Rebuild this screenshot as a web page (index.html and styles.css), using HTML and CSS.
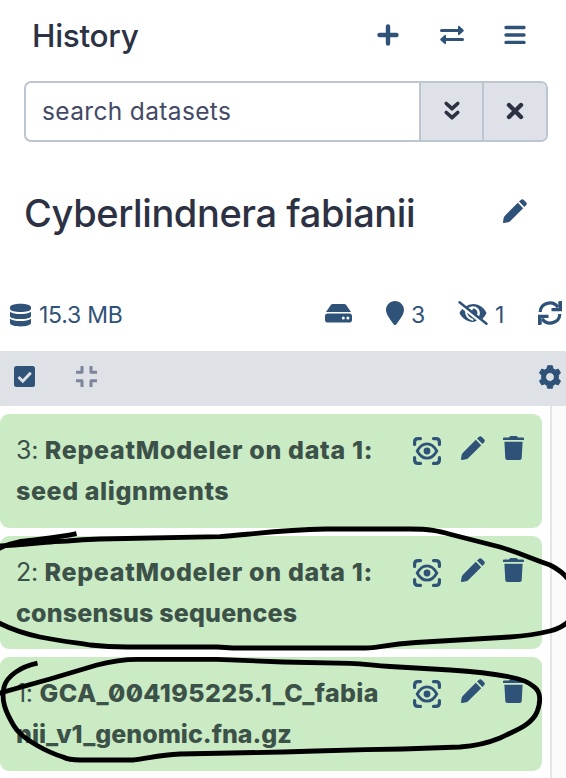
FILE: index.html
```html
<!DOCTYPE html>
<html lang="en">
<head>
<meta charset="utf-8">
<title>History</title>
<link rel="stylesheet" href="styles.css">
</head>
<body>
<svg class="defs" aria-hidden="true">
  <symbol id="pencil" viewBox="0 0 24 24"><path d="M14.8 3.8 20.2 9.2 7.1 22.3Q6.2 23.1 5 23.3L1.2 24Q0 24.2 0 23L.7 18.8Q.9 17.7 1.7 16.9ZM16 2.6 17.8.9Q19.3-.5 20.8.9L23.1 3.2Q24.5 4.7 23.1 6.2L21.4 8Z"/></symbol>
  <symbol id="trash" viewBox="0 0 21 24"><path d="M1 1.6H6L6.7.5Q7 0 7.7 0H13.3Q14 0 14.3.5L15 1.6H20Q21 1.6 21 2.6V4H0V2.6Q0 1.6 1 1.6ZM1.4 5.8H19.6L18.7 22.2Q18.5 24 16.7 24H4.3Q2.5 24 2.3 22.2Z"/></symbol>
  <symbol id="view" viewBox="0 0 28 28"><g fill="none" stroke="currentColor" stroke-width="3.2" stroke-linecap="round"><path d="M1.6 7.5V5Q1.6 1.6 5 1.6H7.5M20.5 1.6H23Q26.4 1.6 26.4 5V7.5M26.4 20.5V23Q26.4 26.4 23 26.4H20.5M7.5 26.4H5Q1.6 26.4 1.6 23V20.5"/><path stroke-width="2.8" d="M4.2 14Q8.1 6.8 14 6.8T23.8 14Q19.9 21.2 14 21.2T4.2 14Z"/></g><circle cx="14" cy="14" r="3.4"/></symbol>
</svg>

<header class="top">
  <h1>History</h1>
  <nav class="top-actions">
    <svg width="22" height="22" viewBox="0 0 22 22"><path class="line" stroke-width="4.4" d="M11 2.5V19.5M2.5 11H19.5"/></svg>
    <svg width="24" height="20" viewBox="0 0 24 20"><path class="line" stroke-width="3" d="M1.5 5.5H19M5 14.5H22.5"/><path d="M18 1.9Q18 .5 19.3 1L23.5 4.7Q24.2 5.5 23.5 6.3L19.3 10Q18 10.5 18 9.1ZM6 10.9Q6 9.5 4.7 10L.5 13.7Q-.2 14.5 .5 15.3L4.7 19Q6 19.5 6 18.1Z"/></svg>
    <svg width="22" height="20" viewBox="0 0 22 20"><path class="line" stroke-width="3.4" d="M2 2.5H20M2 10H20M2 17.4H20"/></svg>
  </nav>
</header>

<div class="search">
  <div class="search-field">search datasets</div>
  <div class="search-btn"><svg width="16" height="20" viewBox="0 0 16 20"><path class="line" stroke-width="3.7" d="M2.3 2.5 8 7.7 13.7 2.5M2.3 11.5 8 16.7 13.7 11.5"/></svg></div>
  <div class="search-btn last"><svg width="18" height="18" viewBox="0 0 18 18"><path class="line" stroke-width="4.4" d="M3 3 15 15M15 3 3 15"/></svg></div>
</div>

<div class="name-row">
  <h2>Cyberlindnera fabianii</h2>
  <svg width="24" height="24"><use href="#pencil"/></svg>
</div>

<div class="stats">
  <svg class="db" width="22" height="24" viewBox="0 0 22 24"><path d="M0 4C0-.9 22-.9 22 4V5.5C22 10 0 10 0 5.5ZM0 8.5C4 11.7 18 11.7 22 8.5V13C22 17.4 0 17.4 0 13ZM0 16C4 19.2 18 19.2 22 16V20.5C22 25.2 0 25.2 0 20.5Z"/></svg>
  <span class="size">15.3 MB</span>
  <svg class="disk" width="27" height="19" viewBox="0 0 27 19"><path d="M5.8 1Q6.5 0 7.8 0H19.2Q20.5 0 21.2 1L26 8H1ZM2.8 9.5H24.2Q27 9.5 27 12.3V15.7Q27 18.5 24.2 18.5H2.8Q0 18.5 0 15.7V12.3Q0 9.5 2.8 9.5Z"/><circle class="hole" cx="18.3" cy="14" r="1.5"/><circle class="hole" cx="22.9" cy="14" r="1.5"/></svg>
  <svg class="pin" width="18" height="24" viewBox="0 0 18 24"><path d="M9 0C14 0 18 4 18 9 18 13.5 12.8 20 10.2 23.4Q9 24.6 7.8 23.4C5.2 20 0 13.5 0 9 0 4 4 0 9 0Z"/></svg>
  <span class="count">3</span>
  <svg class="hidden-eye" width="30" height="24" viewBox="0 0 30 24"><path d="M7.2 5.8Q10.7 3 15 3C21.8 3 26.5 7.7 28.3 11.4Q28.5 12 28.3 12.6 27 15.7 24.1 18.2L20.8 15.6Q21.9 14 21.9 12C21.9 8.2 18.8 5.2 15 5.2Q12.4 5.2 10.4 6.8L9.5 7.6ZM4.3 8.1 18.8 19.6Q17 21 15 21C8.2 21 3.5 16.3 1.7 12.6Q1.5 12 1.7 11.4 2.6 9.7 4.3 8.1Z"/><path d="M13.5 9.5Q15.2 8.8 15 7.5C18 7.5 20 10 19.3 13.2L18.5 14Z"/><path class="under" d="M8 9.8Q7.8 16.8 15.2 19"/><path class="line" stroke-width="2.5" d="M1.5 1.2 28.5 22.8"/></svg>
  <span class="count one">1</span>
  <svg class="sync" width="24" height="24" viewBox="0 0 24 24"><path class="arc" d="M2.2 11C2.5 2 14.5-1.4 20 6.3M21.8 13C21.5 22 9.5 25.4 4 17.7"/><path d="M20.2 1Q20.7 0 22 0H24V10.3H13.5V7.1H20.5ZM3.8 23Q3.3 24 2 24H0V13.7H10.5V16.9H3.5Z"/></svg>
</div>

<div class="toolbar">
  <svg width="21" height="21" viewBox="0 0 21 21"><rect width="21" height="21" rx="2.5"/><path class="check" d="M4.5 11 8.8 15.2 16.8 6.8"/></svg>
  <svg class="compress" width="21" height="21" viewBox="0 0 21 21"><path d="M0 6.2H6V0M15 0V6.2H21M0 14.8H6V21M15 21V14.8H21"/></svg>
  <svg class="gear" width="22" height="24" viewBox="0 0 22 24"><path fill-rule="evenodd" stroke="currentColor" stroke-linejoin="round" d="M8.6.8H13.4L14 3.8 16.4 5.1 19.3 4.1 21.5 8 19.3 10.2V13.8L21.5 16 19.3 19.9 16.4 18.9 14 20.2 13.4 23.2H8.6L8 20.2 5.6 18.9 2.7 19.9.5 16 2.7 13.8V10.2L.5 8 2.7 4.1 5.6 5.1 8 3.8ZM11 7.6A4.4 4.4 0 1 0 11 16.4 4.4 4.4 0 1 0 11 7.6Z"/></svg>
</div>

<main class="panel">
  <section class="list">
    <article class="card">
      <div class="label">3: <b class="a">RepeatModeler on data 1:</b><br><b class="b">seed alignments</b></div>
      <div class="card-actions"><svg width="28" height="28"><use href="#view"/></svg><svg width="24" height="24"><use href="#pencil"/></svg><svg width="21" height="24"><use href="#trash"/></svg></div>
    </article>
    <article class="card">
      <div class="label">2: <b class="a">RepeatModeler on data 1:</b><br><b class="c">consensus sequences</b></div>
      <div class="card-actions"><svg width="28" height="28"><use href="#view"/></svg><svg width="24" height="24"><use href="#pencil"/></svg><svg width="21" height="24"><use href="#trash"/></svg></div>
    </article>
    <article class="card">
      <div class="label">1: <b class="d">GCA_004195225.1_C_fabia</b><br><b class="e">nii_v1_genomic.fna.gz</b></div>
      <div class="card-actions"><svg width="28" height="28"><use href="#view"/></svg><svg width="24" height="24"><use href="#pencil"/></svg><svg width="21" height="24"><use href="#trash"/></svg></div>
    </article>
  </section>
</main>

<svg class="ink" width="566" height="778" viewBox="0 0 566 778">
  <path d="M76.5 533.7C57 538 38 539 20 541.5Q7 544 -2 549"/>
  <path d="M-3 546C20 545.5 50 541 67 541Q82 539.5 100 539L220 536.7C246 535 275 530 326 529H410C430 529 438 531 451 534.5L500 547C520 553 532 559 550 565Q562 571 569 580"/>
  <path d="M569 621Q562 628 550 631 532 635.5 510 637L416 642.5C385 644.5 378 648 366 648H233L217 647H127Q108 647 90 645C70 642 55 640 40 637Q16 632 -3 622"/>
  <path d="M37.5 663.2C20 667 7 676 4 687 1 700 5 711 14 726 22 740 50 753 63 757Q69 760 80 760H133C148 758.5 158 755 180 754L283 752 316 751 366 749.7 403 749 460 747Q482 745.5 500 738C519 729 532 724 537 712Q544 693 533 686 526 680 510 677 485 672 450 670L390 666.5C370 665 365 664 350 663.3L283 662 217 659.3H140Q119 659 97 665L50 679 -2 693.5"/>
</svg>
</body>
</html>
```

FILE: styles.css
```css
* { box-sizing: border-box; }
body {
  margin: 0;
  width: 566px;
  height: 778px;
  overflow: hidden;
  display: flex;
  flex-direction: column;
  background: #fff;
  color: #2c3143;
  font-family: Inter, "Liberation Sans", sans-serif;
}
svg { display: block; flex: none; fill: currentColor; overflow: visible; }
.defs { position: absolute; width: 0; height: 0; }
.line { fill: none; stroke: currentColor; stroke-linecap: round; stroke-linejoin: round; }
h1, h2 { margin: 0; font-weight: 500; white-space: nowrap; }

.top { height: 81px; padding: 10px 40px 0 32px; display: flex; justify-content: space-between; align-items: flex-start; }
h1 { font-size: 31.5px; line-height: 51px; letter-spacing: -0.3px; }
.top-actions { height: 50px; display: flex; align-items: center; gap: 41px; color: #2f5278; }
.top-actions svg:nth-child(2) { margin-right: -1px; }

.search { height: 61px; margin: 0 18px 0 24px; display: flex; border: 2px solid #bdc5d0; border-radius: 7px; overflow: hidden; }
.search-field { flex: 1; padding-left: 16px; font-size: 24.5px; line-height: 56px; color: #434a65; letter-spacing: 0.35px; white-space: nowrap; }
.search-btn { width: 63px; display: flex; align-items: center; justify-content: center; border-left: 2px solid #bdc5d0; background: #dee1e7; }
.search-btn svg { position: relative; top: -1px; }
.search-btn.last { width: 64px; }

.name-row { height: 142px; padding: 0 39px 0 24px; display: flex; align-items: center; justify-content: space-between; }
.name-row svg { color: #2f5278; margin-top: -4px; }
h2 { font-size: 38px; line-height: 56px; letter-spacing: -0.4px; }

.stats { height: 67px; padding: 7px 5px 0 10px; display: flex; align-items: flex-start; color: #2f5278; }
.stats span { font-size: 23px; line-height: 47px; margin-top: 1px; white-space: nowrap; }
.stats .db { margin-top: 12px; width: 21px; }
.stats .disk { margin: 13px 34px 0 auto; }
.stats .size { margin-left: 8px; letter-spacing: -0.25px; }
.stats .pin, .stats .hidden-eye, .stats .sync { margin-top: 10px; }
.count { width: 14px; margin-left: 7px; }
.stats .hidden-eye { margin-left: 33px; }
.count.one { width: 12px; }
.stats .sync { margin-left: 31px; margin-right: -1px; }
.hole { fill: #fff; }
.under { fill: none; stroke: #fff; stroke-width: 2; }
.arc { fill: none; stroke: currentColor; stroke-width: 3.2; }

.toolbar { height: 55px; padding: 0 5px 4px 14px; display: flex; align-items: center; background: #dee1e6; color: #2f5278; }
.check { fill: none; stroke: #dee1e6; stroke-width: 3; }
.compress { margin-left: 41px; }
.compress path { fill: none; stroke: #7c849b; stroke-width: 3; stroke-linejoin: round; }
.gear { margin-left: auto; }

.panel { flex: 1; background: #fafafa; }
.list { width: 552px; height: 372px; padding: 8px 8px 0 0; display: flex; flex-direction: column; gap: 8px; background: #fff; border-right: 2px solid #e3e5e9; }
.card { height: 113.6px; padding: 16px 18px 0 16px; display: flex; justify-content: space-between; border-radius: 9px; background: #cbebc5; color: #3c5148; }
.label { font-size: 25px; line-height: 41px; white-space: nowrap; letter-spacing: -0.3px; }
.label b { font-weight: 800; }
.label .a { letter-spacing: 0.68px; }
.label .b { letter-spacing: 0.6px; }
.label .c { letter-spacing: 0.18px; }
.label .d { letter-spacing: 0.4px; }
.label .e { letter-spacing: 0; }
.card-actions { display: flex; align-items: flex-start; color: #2f5278; padding-top: 6px; }
.card-actions svg:first-child { margin: 1px 20px 0 0; }
.card-actions svg:last-child { margin-left: 18px; }
.d, .e { font-feature-settings: "zero"; }

.ink { position: absolute; left: 0; top: 0; pointer-events: none; }
.ink path { fill: none; stroke: #000; stroke-width: 4.8; stroke-linejoin: round; }
```
